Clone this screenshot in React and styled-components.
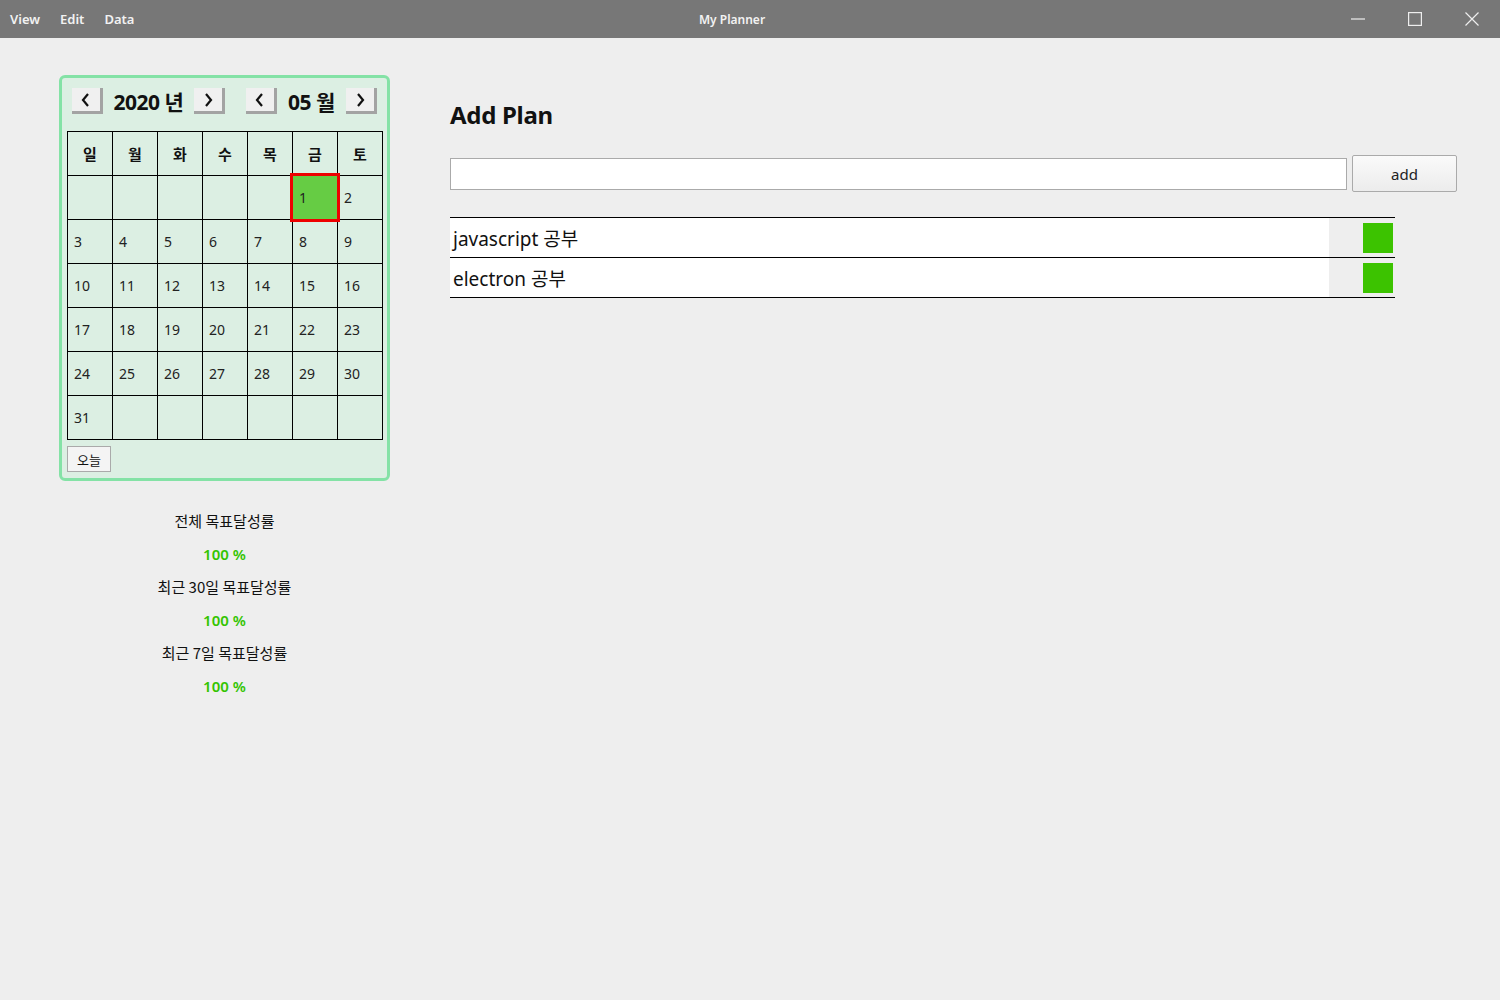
import React from 'react';
import styled, { createGlobalStyle } from 'styled-components';

const GlobalStyle = createGlobalStyle`
  html, body { margin: 0; padding: 0; }
  body {
    background: #eeeeee;
    font-family: "Noto Sans", "Noto Sans CJK KR", sans-serif;
    color: #111;
  }
`;

const Frame = styled.div`
  width: 1500px;
  height: 1000px;
  display: flex;
  flex-direction: column;
  background: #eeeeee;
`;

const TitleBar = styled.div`
  height: 38px;
  background: #777777;
  display: flex;
  align-items: center;
  position: relative;
  color: #f2f2f2;
  font-size: 13px;
  font-weight: 600;
`;

const Menu = styled.div`
  display: flex;
  gap: 20px;
  padding-left: 10px;
`;

const WindowTitle = styled.div`
  position: absolute;
  left: 0;
  right: 0;
  text-align: center;
  font-size: 12px;
  pointer-events: none;
  padding-left: 464px;
  box-sizing: border-box;
  width: 1000px;
`;

const Controls = styled.div`
  margin-left: auto;
  display: flex;
`;

const Ctrl = styled.div`
  width: 57px;
  height: 38px;
  display: flex;
  align-items: center;
  justify-content: center;
`;

const Body = styled.div`
  display: flex;
  padding: 37px 0 0 59px;
  gap: 60px;
`;

const Left = styled.div`
  display: flex;
  flex-direction: column;
  width: 331px;
`;

const Panel = styled.div`
  border: 3px solid #84e2a6;
  border-radius: 6px;
  background: #dcefe3;
  padding: 10px 5px 6px 5px;
  display: flex;
  flex-direction: column;
`;

const Header = styled.div`
  display: flex;
  align-items: center;
  padding-left: 5px;
  height: 26px;
  margin-bottom: 17px;
`;

const NavBtn = styled.div`
  width: 28px;
  height: 23px;
  background: #f0f0f0;
  border-right: 3px solid #a3a3a3;
  border-bottom: 3px solid #a3a3a3;
  display: flex;
  align-items: center;
  justify-content: center;
  margin-left: ${p => p.$ml || 0}px;
`;

const HeadLabel = styled.div`
  font-size: 21px;
  font-weight: 700;
  width: ${p => p.$w}px;
  text-align: center;
  font-family: "Noto Sans", "Noto Sans CJK KR", sans-serif;
  letter-spacing: -0.5px;
`;

const Grid = styled.div`
  display: grid;
  grid-template-columns: repeat(7, 44px);
  grid-auto-rows: 43px;
  gap: 1px;
  background: #000;
  border: 1px solid #000;
  width: 314px;
`;

const HeadCell = styled.div`
  background: #dcefe3;
  display: flex;
  align-items: center;
  justify-content: center;
  font-size: 15px;
  font-weight: 700;
  font-family: "Noto Sans CJK KR", sans-serif;
`;

const DayCell = styled.div`
  background: ${p => (p.$sel ? '#66cc44' : '#dcefe3')};
  position: relative;
  display: flex;
  align-items: center;
  padding-left: 6px;
  font-size: 14px;
  color: #222;
  ${p => p.$sel && `
    outline: 3px solid #ee0000;
    outline-offset: 0px;
    z-index: 1;
  `}
`;

const TodayBtn = styled.div`
  margin-top: 6px;
  width: 42px;
  height: 24px;
  border: 1px solid #aaa;
  background: #f4f4f4;
  display: flex;
  align-items: center;
  justify-content: center;
  font-size: 13px;
  font-family: "Noto Sans CJK KR", sans-serif;
`;

const Stats = styled.div`
  display: flex;
  flex-direction: column;
  align-items: center;
  margin-top: 29px;
  gap: 11px;
`;

const StatLabel = styled.div`
  font-size: 15px;
  font-family: "Noto Sans CJK KR", sans-serif;
  line-height: 22px;
  color: #111;
`;

const StatValue = styled.div`
  font-size: 15px;
  font-weight: 600;
  color: #33c400;
  line-height: 22px;
`;

const Right = styled.div`
  display: flex;
  flex-direction: column;
  padding-top: 25px;
`;

const Title = styled.h2`
  margin: 0;
  font-size: 24px;
  font-weight: 700;
  line-height: 30px;
  letter-spacing: -0.3px;
`;

const InputRow = styled.div`
  display: flex;
  align-items: center;
  gap: 5px;
  margin-top: 25px;
`;

const Input = styled.input`
  width: 897px;
  height: 32px;
  box-sizing: border-box;
  border: 1px solid #aaa;
  background: #fff;
  padding: 0 6px;
  outline: none;
`;

const AddBtn = styled.button`
  width: 105px;
  height: 37px;
  border: 1px solid #aaa;
  border-radius: 2px;
  background: linear-gradient(#fafafa, #ececec);
  font-family: "Noto Sans", sans-serif;
  font-size: 15px;
  color: #222;
`;

const List = styled.div`
  margin-top: 25px;
  width: 945px;
  border-top: 1px solid #000;
`;

const Item = styled.div`
  display: flex;
  height: 39px;
  border-bottom: 1px solid #000;
`;

const ItemText = styled.div`
  flex: 1;
  background: #fff;
  display: flex;
  align-items: center;
  padding-left: 3px;
  font-size: 19px;
  font-family: "Noto Sans", "Noto Sans CJK KR", sans-serif;
`;

const ItemSide = styled.div`
  width: 66px;
  display: flex;
  align-items: center;
  justify-content: flex-end;
  padding-right: 2px;
  box-sizing: border-box;
`;

const Check = styled.div`
  width: 30px;
  height: 30px;
  background: #3cc300;
`;

const Chevron = ({ dir }) => (
  <svg width="12" height="16" viewBox="0 0 12 16">
    <path
      d={dir === 'l' ? 'M8 2 L3 8 L8 14' : 'M4 2 L9 8 L4 14'}
      fill="none"
      stroke="#111"
      strokeWidth="2.2"
    />
  </svg>
);

const days = ['일', '월', '화', '수', '목', '금', '토'];
const cells = [...Array(5).fill(null), ...Array.from({ length: 31 }, (_, i) => i + 1)];
while (cells.length < 42) cells.push(null);

const plans = ['javascript 공부', 'electron 공부'];

const App = () => {
  return (
    <Frame>
      <GlobalStyle />
      <TitleBar>
        <Menu>
          <span>View</span>
          <span>Edit</span>
          <span>Data</span>
        </Menu>
        <WindowTitle>My Planner</WindowTitle>
        <Controls>
          <Ctrl>
            <svg width="14" height="14" viewBox="0 0 14 14"><path d="M0 7 H14" stroke="#eee" strokeWidth="1.2" /></svg>
          </Ctrl>
          <Ctrl>
            <svg width="14" height="14" viewBox="0 0 14 14"><rect x="0.6" y="0.6" width="12.8" height="12.8" fill="none" stroke="#eee" strokeWidth="1.2" /></svg>
          </Ctrl>
          <Ctrl>
            <svg width="14" height="14" viewBox="0 0 14 14"><path d="M0.5 0.5 L13.5 13.5 M13.5 0.5 L0.5 13.5" stroke="#eee" strokeWidth="1.2" /></svg>
          </Ctrl>
        </Controls>
      </TitleBar>
      <Body>
        <Left>
          <Panel>
            <Header>
              <NavBtn><Chevron dir="l" /></NavBtn>
              <HeadLabel $w={91}>2020 년</HeadLabel>
              <NavBtn><Chevron dir="r" /></NavBtn>
              <NavBtn $ml={21}><Chevron dir="l" /></NavBtn>
              <HeadLabel $w={69}>05 월</HeadLabel>
              <NavBtn><Chevron dir="r" /></NavBtn>
            </Header>
            <Grid>
              {days.map(d => <HeadCell key={d}>{d}</HeadCell>)}
              {cells.map((c, i) => (
                <DayCell key={i} $sel={c === 1}>{c}</DayCell>
              ))}
            </Grid>
            <TodayBtn>오늘</TodayBtn>
          </Panel>
          <Stats>
            <StatLabel>전체 목표달성률</StatLabel>
            <StatValue>100 %</StatValue>
            <StatLabel>최근 30일 목표달성률</StatLabel>
            <StatValue>100 %</StatValue>
            <StatLabel>최근 7일 목표달성률</StatLabel>
            <StatValue>100 %</StatValue>
          </Stats>
        </Left>
        <Right>
          <Title>Add Plan</Title>
          <InputRow>
            <Input />
            <AddBtn>add</AddBtn>
          </InputRow>
          <List>
            {plans.map(p => (
              <Item key={p}>
                <ItemText>{p}</ItemText>
                <ItemSide><Check /></ItemSide>
              </Item>
            ))}
          </List>
        </Right>
      </Body>
    </Frame>
  );
};

export default App;
